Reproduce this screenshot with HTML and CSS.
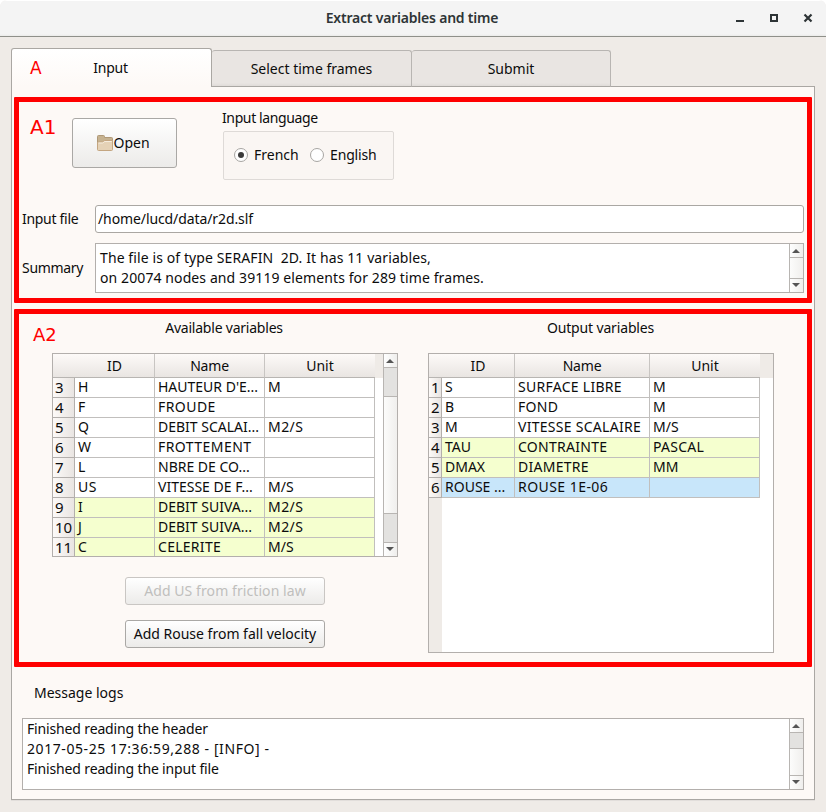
FILE: index.html
```html
<!DOCTYPE html>
<html lang="en">
<head>
<meta charset="utf-8">
<title>Extract variables and time</title>
<link rel="stylesheet" href="styles.css">
</head>
<body>
<div class="window">
  <header class="titlebar">
    <h1>Extract variables and time</h1>
    <div class="controls">
      <svg width="10" height="10" viewBox="0 0 10 10"><path d="M1 7h8v2H1z" fill="#2e3436"/></svg>
      <svg width="10" height="10" viewBox="0 0 10 10"><path d="M2 2h6v6H2z" fill="none" stroke="#2e3436" stroke-width="2"/></svg>
      <svg width="10" height="10" viewBox="0 0 10 10"><path d="M1.5 1.5l7 7M8.500 1.500l-7 7" stroke="#2e3436" stroke-width="2.2"/></svg>
    </div>
  </header>
  <nav class="tabs">
    <div class="tab active"><span class="mark mark-a">A</span>Input</div>
    <div class="tab">Select time frames</div>
    <div class="tab last">Submit</div>
  </nav>
  <main class="panel">
    <section class="frame frame-one">
      <div class="top-row">
        <span class="mark mark-one">A1</span>
        <button class="btn open">
          <svg width="16" height="16" viewBox="0 0 16 16"><path d="M.5 14V1.500q0-1 1-1h5q1 0 1 1v1h7q1 0 1 1V14z" fill="#c6b290" stroke="#af9877"/><path d="M.5 14.500V8q0-1 1-1h4l2-1.500h8v9q0 1-1 1h-13q-1 0-1-1z" fill="#e5d2b6" stroke="#c4a681"/><path d="M1.500 8h4.200l2-1.500h7" fill="none" stroke="#f5ecdd"/></svg><span>Open</span>
        </button>
        <div class="lang">
          <div class="lang-label">Input language</div>
          <div class="group">
            <span class="radio on"></span><span class="french">French</span>
            <span class="radio"></span><span class="english">English</span>
          </div>
        </div>
      </div>
      <div class="field file-row"><label>Input file</label><div class="line-edit">/home/lucd/data/r2d.slf</div></div>
      <div class="field sum-row"><label>Summary</label>
        <div class="text-edit">
          <div class="text summary-text">The file is of type SERAFIN&nbsp; 2D. It has 11 variables,<br>on 20074 nodes and 39119 elements for 289 time frames.</div>
          <div class="scroll"><i class="arrow up"></i><i class="track"></i><i class="arrow down"></i></div>
        </div>
      </div>
    </section>
    <section class="frame frame-two">
      <div class="col left">
        <span class="mark mark-two">A2</span>
        <h2>Available variables</h2>
        <div class="table available">
          <div class="grid">
            <div class="head"><b>ID</b><b>Name</b><b>Unit</b></div>
            <div class="row"><em>3</em><span>H</span><span>HAUTEUR D'E...</span><span>M</span></div>
            <div class="row"><em>4</em><span>F</span><span class="loose">FROUDE</span><span></span></div>
            <div class="row"><em>5</em><span>Q</span><span>DEBIT SCALAI...</span><span class="loose">M2/S</span></div>
            <div class="row"><em>6</em><span>W</span><span class="loose">FROTTEMENT</span><span></span></div>
            <div class="row"><em>7</em><span>L</span><span>NBRE DE CO...</span><span></span></div>
            <div class="row"><em>8</em><span class="loose">US</span><span>VITESSE DE F...</span><span>M/S</span></div>
            <div class="row green"><em>9</em><span>I</span><span>DEBIT SUIVA...</span><span class="loose">M2/S</span></div>
            <div class="row green"><em>10</em><span>J</span><span>DEBIT SUIVA...</span><span class="loose">M2/S</span></div>
            <div class="row green partial"><em>11</em><span>C</span><span class="slack">CELERITE</span><span>M/S</span></div>
          </div>
          <div class="scroll"><i class="arrow up"></i><i class="thumb"></i><i class="track"></i><i class="thumb"></i><i class="arrow down"></i></div>
        </div>
        <button class="btn wide disabled">Add US from friction law</button>
        <button class="btn wide">Add Rouse from fall velocity</button>
      </div>
      <div class="col right">
        <h2>Output variables</h2>
        <div class="table output">
          <div class="grid">
            <div class="head"><b>ID</b><b>Name</b><b>Unit</b></div>
            <div class="row"><em>1</em><span>S</span><span class="slack">SURFACE LIBRE</span><span>M</span></div>
            <div class="row"><em>2</em><span>B</span><span class="slack">FOND</span><span>M</span></div>
            <div class="row"><em>3</em><span>M</span><span class="slack">VITESSE SCALAIRE</span><span>M/S</span></div>
            <div class="row green"><em>4</em><span>TAU</span><span class="slack">CONTRAINTE</span><span class="slack">PASCAL</span></div>
            <div class="row green"><em>5</em><span>DMAX</span><span class="slack">DIAMETRE</span><span>MM</span></div>
            <div class="row blue"><em>6</em><span>ROUSE ...</span><span class="loose">ROUSE 1E-06</span><span></span></div>
            <div class="filler"></div>
          </div>
        </div>
      </div>
    </section>
    <div class="log-label">Message logs</div>
    <div class="text-edit log">
      <div class="text">Finished reading the header<br><span class="stamp">2017-05-25 17:36:59,288 - [INFO] -</span><br>Finished reading the input file</div>
      <div class="scroll"><i class="arrow up"></i><i class="thumb"></i><i class="track"></i><i class="arrow down"></i></div>
    </div>
  </main>
</div>
</body>
</html>
```
FILE: styles.css
```css
* { box-sizing: border-box; }
body { margin: 0; background: #fff; font: 14px/20px "Noto Sans", sans-serif; color: #0c0c0c; }
.window { width: 826px; height: 812px; background: #efebe7; border-radius: 7px 7px 0 0; overflow: hidden; }
.titlebar { height: 37px; background: linear-gradient(#f4f4f4 33px, #e6e6e3 36px); border-bottom: 1px solid #8f908a; border-top: 1px solid #fff; display: flex; align-items: center; position: relative; }
h1 { margin: 0 0 2px; width: 824px; text-align: center; font-size: 14px; font-weight: 600; line-height: 33px; color: #2e3436; letter-spacing: -.21px; }
.controls { position: absolute; right: 13px; top: 12px; display: flex; gap: 24px; }
.controls svg { display: block; }

.tabs { display: flex; align-items: flex-end; height: 50px; padding-left: 11px; position: relative; z-index: 1; }
.tab { width: 200px; height: 37px; border: 1px solid #b8b5b2; border-left-width: 0; border-bottom-color: #aaa7a3; background: linear-gradient(#e9e5e2 32px, #dfdbd8); border-radius: 3px 3px 0 0; text-align: center; line-height: 36px; }
.tab.last { width: 199px; }
.tab.active { width: 201px; height: 39px; padding-right: 2px; border-left-width: 1px; border-color: #aaa7a3; border-bottom: 0; background: linear-gradient(#fff, #fdf9f6); line-height: 38px; position: relative; letter-spacing: -.2px; }
.mark { color: #f00; font-family: "DejaVu Sans", sans-serif; position: absolute; letter-spacing: 0; }
.mark-a { left: 18px; top: 0; font-size: 17px; }
.mark-one { left: 11px; top: 15px; font-size: 20px; }
.mark-two { left: 14px; top: 11px; font-size: 18px; }

.panel { margin: -1px 0 0 11px; width: 804px; height: 714px; border: 1px solid #aaa7a3; background: #fdf9f6; box-shadow: 0 1px #e2dedb; padding: 10px 2px 0; }
.frame { position: relative; border: 5px solid #f00; border-radius: 1px; }
.frame-one { height: 206px; }
.top-row { display: flex; height: 103px; padding-left: 53px; }
.btn { font: inherit; color: inherit; padding: 0; border: 1px solid #aaa8a5; border-radius: 3px; background: linear-gradient(#fff, #ecebe9); display: flex; align-items: center; justify-content: center; }
.open { width: 105px; height: 50px; margin-top: 16px; padding-right: 2px; }
.lang { margin: 6px 0 0 45px; }
.lang-label { height: 23px; letter-spacing: -.38px; }
.group { margin-left: 1px; width: 171px; height: 49px; border: 1px solid #dedad7; border-radius: 2px; background: #faf6f3; display: flex; align-items: center; padding: 0 0 2px 10px; }
.radio { width: 14px; height: 14px; border: 1px solid #a8a6a3; border-radius: 50%; background: #fff; margin-right: 6px; display: flex; align-items: center; justify-content: center; }
.radio.on::after { content: ""; width: 6px; height: 6px; border-radius: 50%; background: #3b3b3b; }
.french { width: 56px; }
.english { letter-spacing: -.15px; }
.field { display: flex; align-items: center; padding-left: 3px; }
.field label { width: 73px; letter-spacing: -.3px; }
.file-row { height: 28px; }
.sum-row { margin-top: 10px; }
.line-edit { width: 709px; height: 28px; border: 1px solid #aaa7a3; border-radius: 3px; background: #fff; padding-left: 2px; line-height: 26px; letter-spacing: -.1px; }
.text-edit { width: 709px; height: 50px; border: 1px solid #b3afac; background: #fff; display: flex; }
.text { flex: 1; padding-left: 4px; white-space: nowrap; }
.summary-text { padding-top: 4px; letter-spacing: .1px; }

.scroll { width: 14px; border-left: 1px solid #b8b5b2; display: flex; flex-direction: column; }
.arrow { height: 13px; padding-right: 1px; background: linear-gradient(90deg, #fefefe, #efeeec); display: flex; align-items: center; justify-content: center; }
.arrow::after { content: ""; border: 4px solid transparent; border-top-width: 0; border-bottom: 4px solid #555; }
.arrow.down { padding-bottom: 1px; }
.arrow.down::after { border-bottom-width: 0; border-top: 4px solid #555; }
.track { flex: 1; background: linear-gradient(90deg, #fcfcfb, #f0efed); border: solid #b8b5b2; border-width: 1px 0; }
.available .track { border-bottom: 0; }
.thumb { height: 29px; background: #e3e2e0; border-top: 1px solid #b8b5b2; }
.thumb + .arrow { border-top: 1px solid #b8b5b2; height: 14px; }

.frame-two { height: 358px; margin-top: 6px; display: flex; }
.col { padding-left: 33px; width: 376px; }
h2 { margin: 4px 0 15px; font: inherit; text-align: center; width: 344px; letter-spacing: -.22px; }
.right h2 { width: 345px; letter-spacing: -.15px; }
.table { width: 346px; border: 1px solid #b3afac; background: #fff; display: flex; }
.available { height: 204px; }
.output { height: 300px; }
.grid { flex: 1; display: flex; flex-direction: column; background: #fff; }
.head { height: 24px; flex: none; display: flex; background: #efebe7; }
.head b { font-weight: 400; text-align: center; line-height: 23px; border: solid #c8c5c2; border-width: 0 1px 1px 0; border-bottom-color: #b8b5b2; background: linear-gradient(#fdfaf8, #e9e5e2); }
.head b:last-child { border-right: 0; }
.head b:nth-child(2) { letter-spacing: -.2px; }
.row { display: flex; height: 20px; flex: none; }
.row span, .row em { border: solid #c1bfbd; border-width: 0 1px 1px 0; height: 20px; line-height: 18px; white-space: nowrap; padding-left: 3px; }
.row em { font-style: normal; font-size: 15px; line-height: 19px; padding-left: 2px; background: linear-gradient(90deg, #fdfaf8, #e9e5e2); border-color: #b3afac; }
.row.partial { height: 178px; height: 18px; }
.row.partial span, .row.partial em { height: 18px; border-bottom: 0; }
.loose { letter-spacing: .45px; }
.slack { letter-spacing: .28px; }
.available em { width: 22px; }
.available .row :nth-child(2) { width: 80px; }
.available .row :nth-child(n+3) { width: 110px; }
.available .head b:nth-child(1) { width: 102px; padding-left: 22px; }
.available .head b:nth-child(n+2) { width: 110px; }
.output em { width: 13px; }
.output .row :nth-child(2) { width: 73px; }
.output .row :nth-child(3) { width: 135px; }
.output .row :nth-child(4) { width: 110px; }
.output .head b:nth-child(1) { width: 86px; padding-left: 13px; }
.output .head b:nth-child(2) { width: 135px; }
.output .head b:nth-child(3) { width: 110px; }
.green { background: linear-gradient(90deg, #f5ffcf 322px, #fff 322px); }
.output .green { background: linear-gradient(90deg, #f5ffcf 331px, #fff 331px); }
.blue { background: linear-gradient(90deg, #c8e6fa 331px, #fff 331px); }
.filler { flex: 1; width: 13px; background: #efebe7; }
.wide { width: 200px; height: 28px; margin: 20px 0 0 73px; }
.wide + .wide { margin-top: 15px; }
.disabled { color: #c0bfbd; border-color: #c9c6c3; letter-spacing: .08px; }
.log-label { margin: 16px 0 15px 20px; }
.log { width: 782px; height: 72px; margin-left: 8px; letter-spacing: -.15px; }
.stamp { letter-spacing: .58px; }
.log .thumb { height: 16px; }
```
